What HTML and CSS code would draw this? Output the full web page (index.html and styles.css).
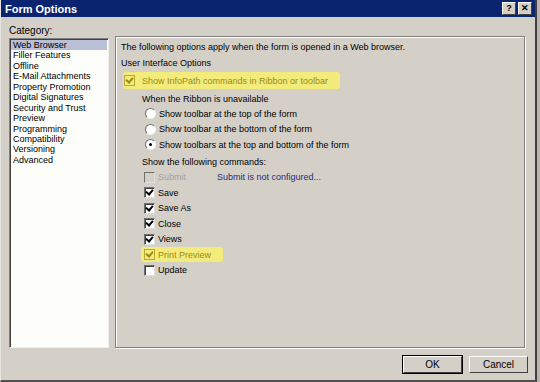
FILE: index.html
```html
<!DOCTYPE html>
<html>
<head>
    <title>Form Options</title>
    <link rel="stylesheet" href="styles.css">
</head>
<body>
    <div class="window">
        <!-- Title bar -->
        <div class="titlebar">
            <span class="title">Form Options</span>
            <div class="caption-buttons">
                <span class="cap-btn">?</span>
                <span class="cap-btn close">&#x2715;</span>
            </div>
        </div>

        <div class="main">
            <!-- Category list -->
            <div class="category">
                <div class="cat-label">Category:</div>
                <ul class="listbox">
                    <li class="selected">Web Browser</li>
                    <li>Filler Features</li>
                    <li>Offline</li>
                    <li>E-Mail Attachments</li>
                    <li>Property Promotion</li>
                    <li>Digital Signatures</li>
                    <li>Security and Trust</li>
                    <li>Preview</li>
                    <li>Programming</li>
                    <li>Compatibility</li>
                    <li>Versioning</li>
                    <li>Advanced</li>
                </ul>
            </div>

            <!-- Options panel -->
            <div class="panel">
                <div class="intro">The following options apply when the form is opened in a Web browser.</div>
                <div class="section">User Interface Options</div>
                <div class="row highlight">
                    <span class="check checked"></span>
                    <span>Show InfoPath commands in Ribbon or toolbar</span>
                </div>
                <div class="sub-label">When the Ribbon is unavailable</div>
                <div class="row radio-row">
                    <span class="radio"></span>
                    <span>Show toolbar at the top of the form</span>
                </div>
                <div class="row radio-row">
                    <span class="radio"></span>
                    <span>Show toolbar at the bottom of the form</span>
                </div>
                <div class="row radio-row">
                    <span class="radio on"></span>
                    <span>Show toolbars at the top and bottom of the form</span>
                </div>
                <div class="sub-label commands">Show the following commands:</div>
                <div class="row cmd disabled">
                    <span class="check"></span>
                    <span class="cmd-name">Submit</span>
                    <span class="link">Submit is not configured...</span>
                </div>
                <div class="row cmd">
                    <span class="check checked"></span>
                    <span>Save</span>
                </div>
                <div class="row cmd">
                    <span class="check checked"></span>
                    <span>Save As</span>
                </div>
                <div class="row cmd">
                    <span class="check checked"></span>
                    <span>Close</span>
                </div>
                <div class="row cmd">
                    <span class="check checked"></span>
                    <span>Views</span>
                </div>
                <div class="row cmd preview">
                    <div class="highlight small">
                        <span class="check checked"></span>
                        <span>Print Preview</span>
                    </div>
                </div>
                <div class="row cmd">
                    <span class="check"></span>
                    <span>Update</span>
                </div>
            </div>
        </div>

        <div class="footer">
            <button class="btn default">OK</button>
            <button class="btn">Cancel</button>
        </div>
    </div>
</body>
</html>
```

FILE: styles.css
```css
/* Classic dialog look */
body {
    margin: 0;
    padding: 0;
    background-color: #b8b4ac;
    font-family: 'Liberation Sans', Arial, sans-serif;
    font-size: 9px;
    color: #000;
}
.window {
    width: 534px;
    height: 380px;
    background-color: #d4d0c8;
    border-left: 1px solid #e8e6e0;
    border-right: 2px solid #404040;
    border-bottom: 2px solid #505050;
    display: flex;
    flex-direction: column;
}
.titlebar {
    height: 17px;
    background-color: #0b2470;
    color: #fff;
    display: flex;
    align-items: center;
    justify-content: space-between;
    padding: 0 3px 0 4px;
}
.title {
    font-weight: bold;
    font-size: 11px;
}
.caption-buttons {
    display: flex;
    gap: 2px;
}
.cap-btn {
    width: 12px;
    height: 11px;
    background-color: #d4d0c8;
    color: #000;
    font-size: 9px;
    font-weight: bold;
    text-align: center;
    line-height: 11px;
    border: 1px solid;
    border-color: #fff #404040 #404040 #fff;
}
.main {
    display: flex;
    padding: 5px 10px 0 8px;
    height: 326px;
}
.category {
    width: 100px;
    display: flex;
    flex-direction: column;
}
.cat-label {
    font-size: 10px;
    height: 15px;
    line-height: 15px;
    padding-top: 1px;
}
.listbox {
    list-style: none;
    margin: 0;
    padding: 1px;
    flex: 1;
    background-color: #fdfefa;
    border: 1px solid;
    border-color: #808080 #f0f0f0 #f0f0f0 #808080;
    box-shadow: inset 1px 1px 0 #404040;
}
.listbox li {
    height: 10.45px;
    line-height: 10.45px;
    padding-left: 2px;
}
.listbox li.selected {
    background-color: #b9bfd6;
}
.panel {
    flex: 1;
    margin: 14px 0 0 6px;
    border: 1px solid #808080;
    box-shadow: 1px 1px 0 #fff, inset 1px 1px 0 #fff;
    padding: 2px 0 0 5px;
}
.intro,
.section {
    height: 16px;
    line-height: 16px;
}
.row {
    display: flex;
    align-items: center;
    gap: 3px;
    height: 15.5px;
}
.highlight {
    display: flex;
    align-items: center;
    background-color: #f4ec7a;
    color: #9a8a18;
    width: fit-content;
    margin: 1px 0 0 2px;
    padding: 0 12px 0 1px;
    gap: 7px;
    height: 17px;
    border-radius: 3px;
}
.highlight.small {
    margin: 0 0 0 -3px;
    padding: 0 12px 0 3px;
    gap: 3px;
    height: 15px;
}
.sub-label {
    padding-left: 21px;
    height: 17px;
    line-height: 20px;
}
.sub-label.commands {
    height: 17px;
    line-height: 19px;
}
.radio-row {
    padding-left: 24px;
}
.cmd {
    padding-left: 23px;
}
.check {
    width: 9px;
    height: 9px;
    background-color: #fff;
    border: 1px solid;
    border-color: #707070 #e0e0e0 #e0e0e0 #707070;
    box-shadow: inset 1px 1px 0 #404040;
    position: relative;
    flex-shrink: 0;
}
.check.checked::after {
    content: "";
    position: absolute;
    left: 2px;
    top: 0px;
    width: 3px;
    height: 5px;
    border: solid #000;
    border-width: 0 2px 2px 0;
    transform: rotate(40deg);
}
.highlight .check {
    background-color: #f4ec7a;
    box-shadow: none;
    border-color: #b8a830;
}
.highlight .check.checked::after {
    border-color: #9a8a18;
}
.radio {
    width: 9px;
    height: 9px;
    border-radius: 50%;
    background-color: #fff;
    border: 1px solid;
    border-color: #707070 #f0f0f0 #f0f0f0 #707070;
    position: relative;
    flex-shrink: 0;
}
.radio.on::after {
    content: "";
    position: absolute;
    left: 3px;
    top: 3px;
    width: 3px;
    height: 3px;
    border-radius: 50%;
    background-color: #000;
}
.disabled .check {
    background-color: #d4d0c8;
    box-shadow: none;
}
.disabled .cmd-name {
    color: #a0a0a0;
    width: 56px;
}
.link {
    color: #2a2a80;
}
.footer {
    display: flex;
    justify-content: flex-end;
    gap: 7px;
    padding: 8px 7px 0 0;
}
.btn {
    width: 59px;
    height: 17px;
    font-family: 'Liberation Sans', Arial, sans-serif;
    font-size: 10px;
    background-color: #d4d0c8;
    border: 1px solid;
    border-color: #fff #404040 #404040 #fff;
    padding: 0;
}
.btn.default {
    outline: 1px solid #000;
}
```
